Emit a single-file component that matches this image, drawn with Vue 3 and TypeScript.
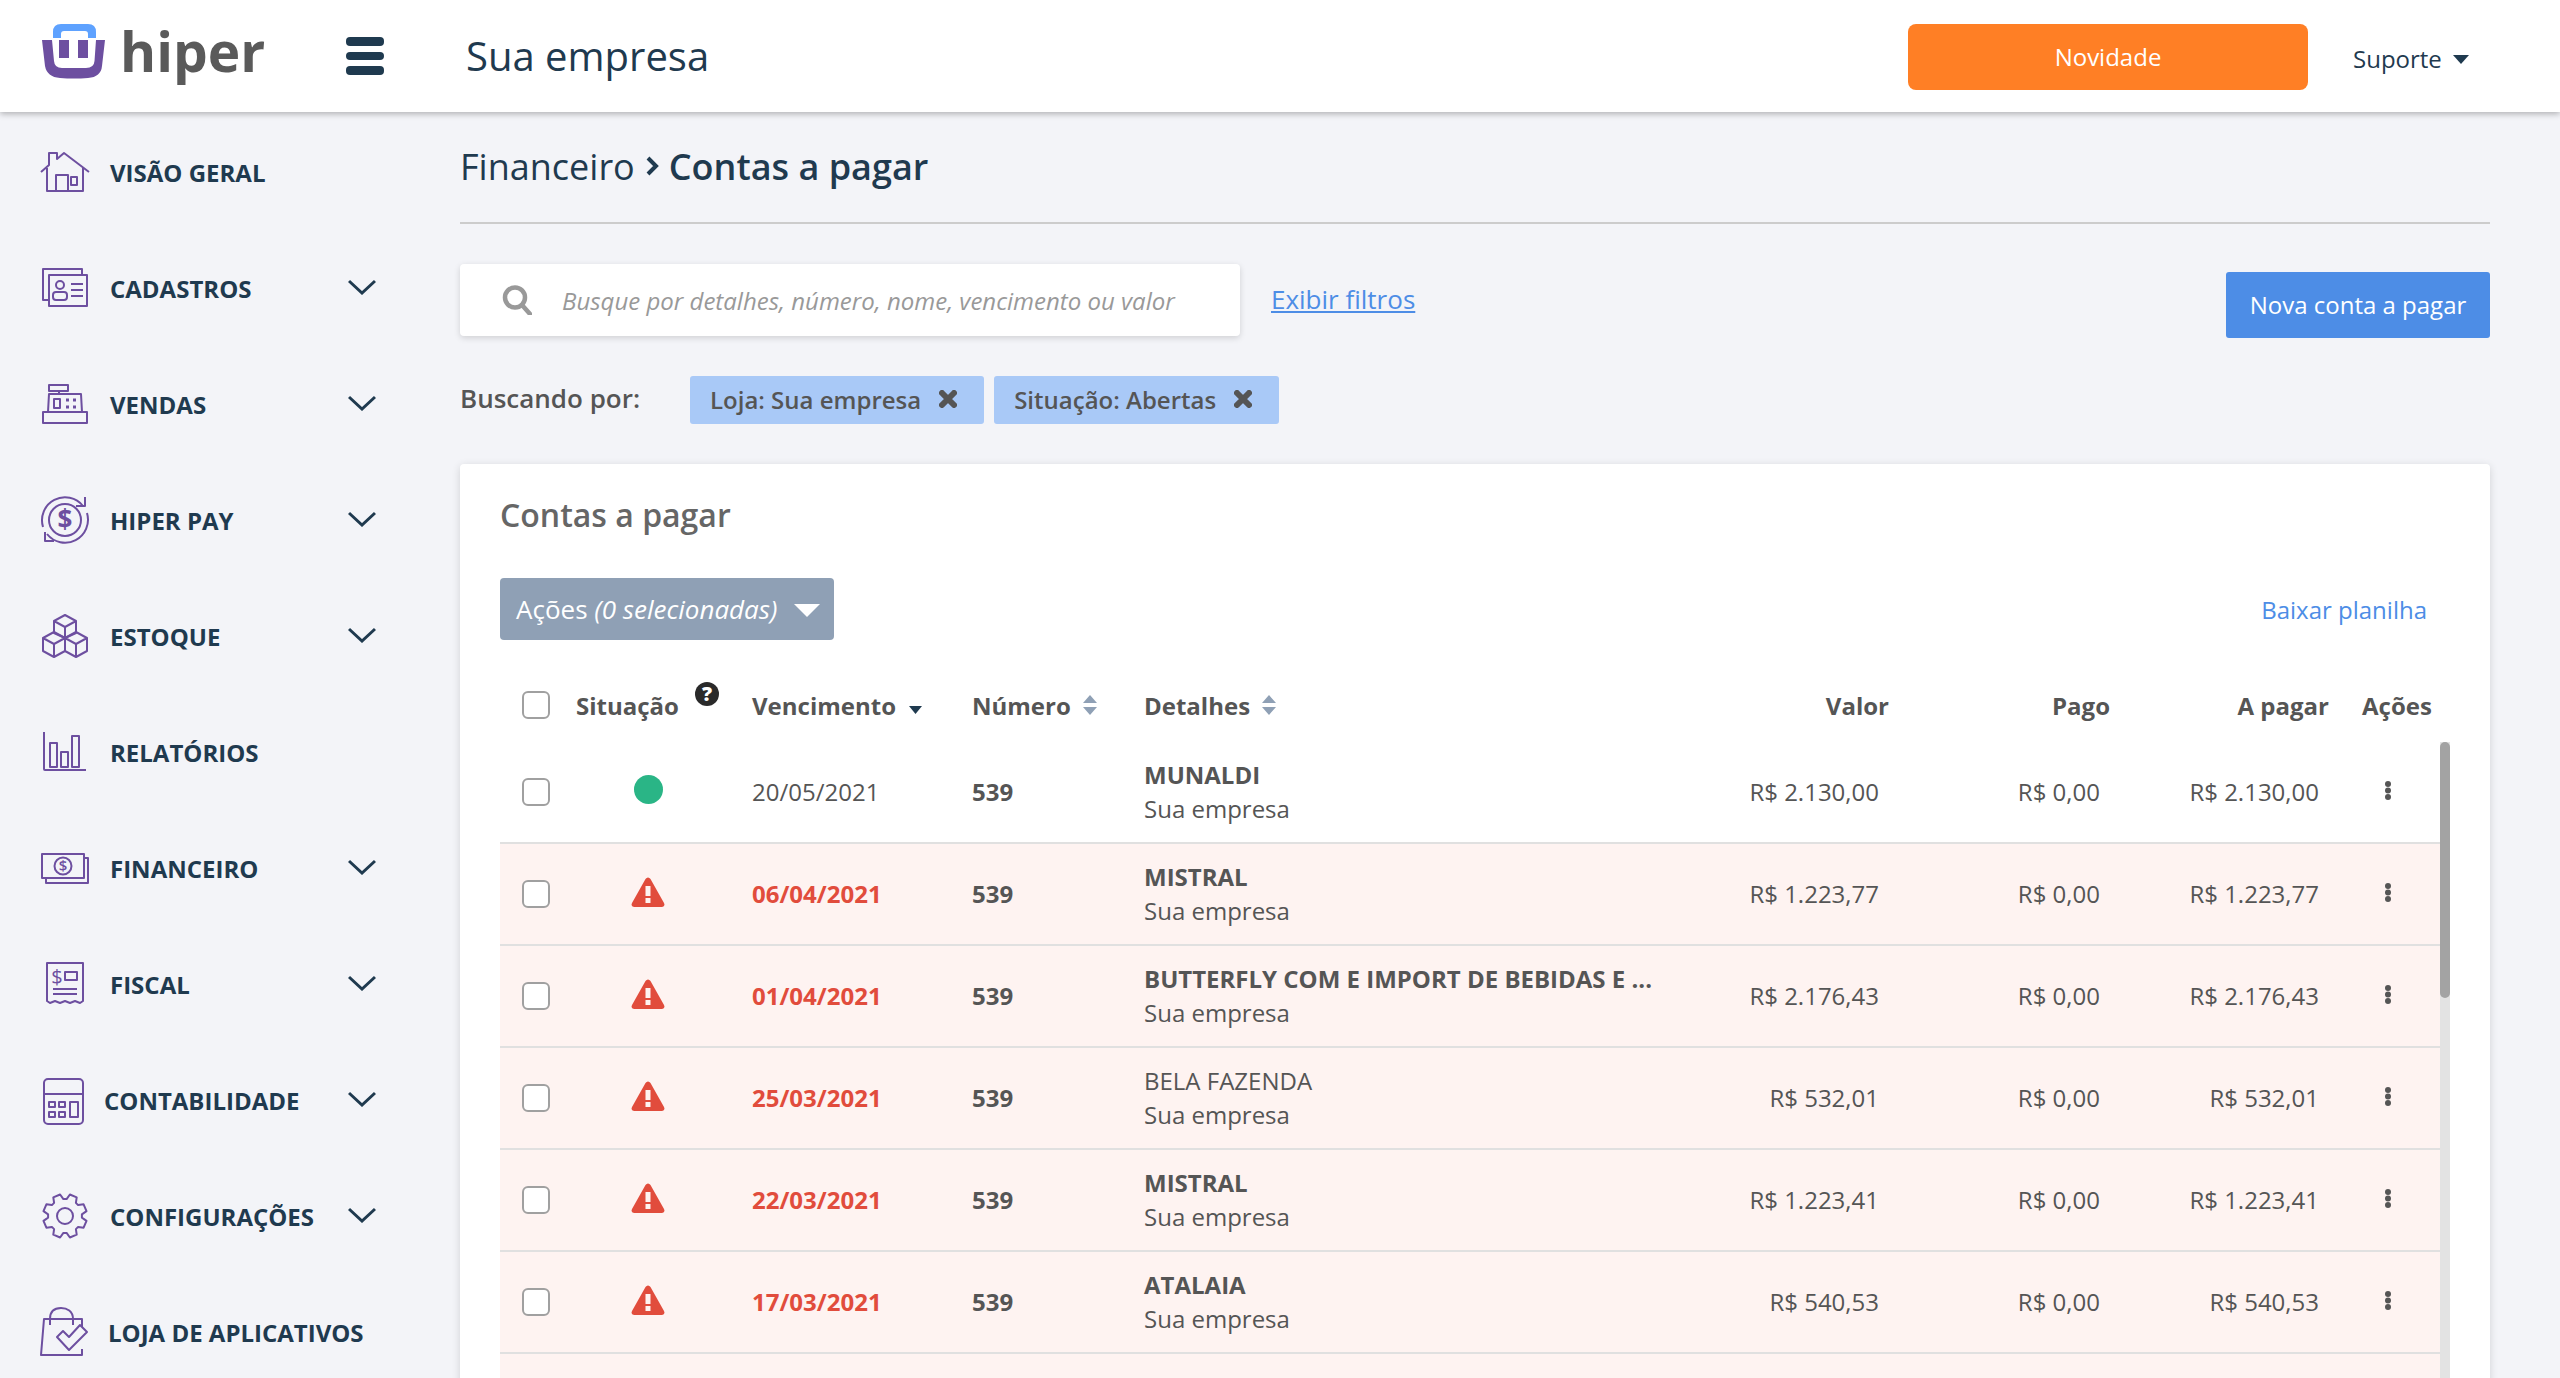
<template>
  <div class="page">
    <!-- Barra superior -->
    <header class="topbar">
      <svg class="logo" width="64" height="58" viewBox="0 0 64 58">
        <path d="M11 17 V11 Q11 3 19 3 H46 Q54 3 54 11 V17 H46 V13 Q46 10 43 10 H22 Q19 10 19 13 V17 Z" fill="#5ea2ff" />
        <path d="M0 19 H10 L12 40 Q12.500 47 20 47 H44 Q52 47 52.500 40 L54 19 H63 L60 45 Q59 56 46 57 Q32 58 18 57 Q5 56 3 45 Z" fill="#6d4fa0" />
        <rect x="17" y="19" width="10" height="18" fill="#6d4fa0" />
        <rect x="36" y="19" width="10" height="18" fill="#6d4fa0" />
      </svg>
      <span class="brand">hiper</span>
      <button class="burger"><i></i><i></i><i></i></button>
      <span class="company">Sua empresa</span>
      <button class="news">Novidade</button>
      <span class="support">Suporte<b class="caret"></b></span>
    </header>

    <div class="layout">
      <!-- Menu lateral -->
      <nav class="sidebar">
        <a v-for="item in menu" :key="item.label" class="nav-item" :class="item.cls">
          <svg class="nav-icon" width="50" height="50" viewBox="0 0 50 50" fill="none" stroke="#6d4fa0" stroke-width="2" stroke-linejoin="round">
            <template v-if="item.icon === 'home'">
              <path d="M1 25 L9 18 V6 H17 V12 L24 6 L49 25" />
              <path d="M7 21 V44 H43 V21" />
              <path d="M16 44 V28 H28 V44" />
              <rect x="31" y="30" width="6" height="8" />
            </template>
            <template v-else-if="item.icon === 'card'">
              <path d="M9 37 H3 V6 H42 V12" />
              <rect x="9" y="12" width="38" height="31" />
              <circle cx="20" cy="22" r="4" />
              <rect x="13" y="29" width="14" height="8" rx="3" />
              <path d="M31 21 H43 M31 27 H43 M31 33 H43" />
            </template>
            <template v-else-if="item.icon === 'register'">
              <rect x="3" y="33" width="44" height="11" />
              <path d="M8 33 L9 15 H41 L42 33" />
              <path d="M9 6 H28 V12 H9 Z M19 12 V15" />
              <rect x="14" y="20" width="6" height="9" />
              <path d="M26 21 H29 M33 21 H36 M26 28 H29 M33 28 H36" stroke-width="3" />
            </template>
            <template v-else-if="item.icon === 'pay'">
              <path d="M43 11 A23 23 0 0 0 3 32" />
              <path d="M7 39 A23 23 0 0 0 47 18" />
              <path d="M36 11 H45 V2" />
              <path d="M5 37 V46 H14" />
              <circle cx="25" cy="25" r="16" />
              <text x="25" y="34" class="money money-lg">$</text>
            </template>
            <template v-else-if="item.icon === 'boxes'">
              <path d="M25 4 L36 10 V22 L25 27 L14 22 V10 Z M14 10 L25 16 L36 10 M25 16 V27" />
              <path d="M3 27 L14 21 L25 27 V40 L14 46 L3 40 Z M3 27 L14 33 L25 27 M14 33 V46" />
              <path d="M25 27 L36 21 L47 27 V40 L36 46 L25 40 Z M25 27 L36 33 L47 27 M36 33 V46" />
            </template>
            <template v-else-if="item.icon === 'chart'">
              <path d="M4 5 V42 Q4 43 5 43 H46" />
              <rect x="10" y="16" width="7" height="24" />
              <rect x="21" y="25" width="7" height="15" />
              <rect x="32" y="9" width="7" height="31" />
            </template>
            <template v-else-if="item.icon === 'cash'">
              <rect x="2" y="11" width="42" height="24" />
              <path d="M44 15 H48 V40 H6 V35" />
              <circle cx="23" cy="23" r="8.500" />
              <text x="23" y="28" class="money">$</text>
            </template>
            <template v-else-if="item.icon === 'receipt'">
              <path d="M7 4 H43 V42 L40 44 L35 42 L30 44 L25 42 L20 44 L15 42 L10 44 L7 42 Z" />
              <text x="17" y="25" class="money money-md">$</text>
              <rect x="25" y="13" width="12" height="8" />
              <path d="M13 30 H37 M13 35 H37" />
            </template>
            <template v-else-if="item.icon === 'calc'">
              <rect x="4" y="4" width="39" height="45" rx="4" />
              <path d="M4 19 H43" />
              <rect x="9" y="27" width="6" height="5" />
              <rect x="19" y="27" width="6" height="5" />
              <rect x="9" y="37" width="6" height="5" />
              <rect x="19" y="37" width="6" height="5" />
              <rect x="30" y="27" width="8" height="15" />
            </template>
            <template v-else-if="item.icon === 'gear'">
              <path :d="gearPath" />
              <circle cx="25" cy="25" r="8" />
            </template>
            <template v-else>
              <path d="M42 25 V12 H4 L1 48 H42 V42" />
              <path d="M10 18 V12 C10 4 15 1 21 1 C27 1 33 4 33 12 V18" />
              <path d="M17 30 L23 24 L29 30 L40 18 L47 25 L29 43 Z" fill="#f3f4f8" />
            </template>
          </svg>
          <span class="nav-label">{{ item.label }}</span>
          <svg v-if="item.arrow" class="chevron" width="28" height="16" viewBox="0 0 28 16" fill="none" stroke="#1f3a4f" stroke-width="3">
            <path d="M1 2 L14 14 L27 2" />
          </svg>
        </a>
      </nav>

      <main class="content">
        <div class="crumb">
          <span class="crumb-root">Financeiro</span>
          <svg width="14" height="20" viewBox="0 0 14 20" fill="none" stroke="#1f3a4f" stroke-width="4">
            <path d="M3 2 L11 10 L3 18" />
          </svg>
          <strong>Contas a pagar</strong>
        </div>

        <div class="toolbar">
          <label class="search">
            <svg width="30" height="30" viewBox="0 0 30 30" fill="none" stroke="#999" stroke-width="4.500">
              <circle cx="13" cy="12.500" r="10" />
              <path d="M20 20 L28 29" stroke-linecap="round" />
            </svg>
            <input type="text" placeholder="Busque por detalhes, número, nome, vencimento ou valor" />
          </label>
          <a class="filters">Exibir filtros</a>
          <button class="new-btn">Nova conta a pagar</button>
        </div>

        <div class="chips">
          <span class="chips-label">Buscando por:</span>
          <span v-for="chip in chips" :key="chip" class="chip">
            {{ chip }}
            <svg width="18" height="18" viewBox="0 0 18 18" stroke="#555" stroke-width="6" stroke-linecap="round">
              <path d="M3 3 L15 15 M15 3 L3 15" />
            </svg>
          </span>
        </div>

        <section class="card">
          <h2>Contas a pagar</h2>
          <div class="card-actions">
            <button class="bulk">Ações <em>(0 selecionadas)</em><b class="bulk-caret"></b></button>
            <a class="sheet">Baixar planilha</a>
          </div>

          <div class="grid thead">
            <span><input type="checkbox" class="check" /></span>
            <span class="th-status">Situação<i class="help">?</i></span>
            <span class="th-sort">Vencimento
              <svg class="sort-down" width="13" height="8" viewBox="0 0 13 8"><path d="M0 0 H13 L6.500 8 Z" fill="#1f3a4f" /></svg>
            </span>
            <span class="th-sort">Número
              <svg width="14" height="20" viewBox="0 0 14 20" fill="#8fa0b5"><path d="M7 0 L14 8 H0 Z M7 20 L14 12 H0 Z" /></svg>
            </span>
            <span class="th-sort">Detalhes
              <svg width="14" height="20" viewBox="0 0 14 20" fill="#8fa0b5"><path d="M7 0 L14 8 H0 Z M7 20 L14 12 H0 Z" /></svg>
            </span>
            <span class="right">Valor</span>
            <span class="right">Pago</span>
            <span class="right">A pagar</span>
            <span class="th-actions">Ações</span>
          </div>

          <div class="tbody">
            <div class="rows">
              <div v-for="row in rows" :key="row.due" class="grid row" :class="{ late: row.late }">
                <span><input type="checkbox" class="check" /></span>
                <span class="status">
                  <svg v-if="row.late" width="34" height="31" viewBox="0 0 34 31">
                    <path d="M17 1.500 Q18.500 1.500 19.500 3 L33 27 Q34.500 30.500 31 31 H3 Q-.5 30.500 1 27 L14.500 3 Q15.500 1.500 17 1.500 Z" fill="#e14c3c" />
                    <rect x="14.500" y="10" width="5" height="10" fill="#fef3f1" />
                    <rect x="14.500" y="22" width="5" height="5" fill="#fef3f1" />
                  </svg>
                  <i v-else class="dot"></i>
                </span>
                <span class="due">{{ row.due }}</span>
                <span class="num">539</span>
                <span class="details">
                  <b :class="{ plain: row.plain }">{{ row.name }}</b>
                  <small>Sua empresa</small>
                </span>
                <span class="right money-cell">R$ {{ row.value }}</span>
                <span class="right money-cell">R$ 0,00</span>
                <span class="right money-cell">R$ {{ row.value }}</span>
                <span class="more">
                  <svg width="6" height="19" viewBox="0 0 6 19" fill="#555">
                    <circle cx="3" cy="3" r="3" /><circle cx="3" cy="9.500" r="3" /><circle cx="3" cy="16" r="3" />
                  </svg>
                </span>
              </div>
              <div class="grid row late"></div>
            </div>
            <div class="scrollbar"><div class="thumb"></div></div>
          </div>
        </section>
      </main>
    </div>
  </div>
</template>

<script setup lang="ts">
interface MenuItem {
  label: string
  icon: string
  arrow: boolean
  cls?: string
}

interface Row {
  due: string
  name: string
  value: string
  late: boolean
  plain?: boolean
}

const menu: MenuItem[] = [
  { label: 'Visão geral', icon: 'home', arrow: false },
  { label: 'Cadastros', icon: 'card', arrow: true },
  { label: 'Vendas', icon: 'register', arrow: true },
  { label: 'Hiper Pay', icon: 'pay', arrow: true },
  { label: 'Estoque', icon: 'boxes', arrow: true },
  { label: 'Relatórios', icon: 'chart', arrow: false },
  { label: 'Financeiro', icon: 'cash', arrow: true },
  { label: 'Fiscal', icon: 'receipt', arrow: true },
  { label: 'Contabilidade', icon: 'calc', arrow: true, cls: 'tight' },
  { label: 'Configurações', icon: 'gear', arrow: true },
  { label: 'Loja de aplicativos', icon: 'bag', arrow: false, cls: 'semi-tight' },
]

const chips = ['Loja: Sua empresa', 'Situação: Abertas']

const rows: Row[] = [
  { due: '20/05/2021', name: 'MUNALDI', value: '2.130,00', late: false },
  { due: '06/04/2021', name: 'MISTRAL', value: '1.223,77', late: true },
  { due: '01/04/2021', name: 'BUTTERFLY COM E IMPORT DE BEBIDAS E ...', value: '2.176,43', late: true },
  { due: '25/03/2021', name: 'BELA FAZENDA', value: '532,01', late: true, plain: true },
  { due: '22/03/2021', name: 'MISTRAL', value: '1.223,41', late: true },
  { due: '17/03/2021', name: 'ATALAIA', value: '540,53', late: true },
]

// Contorno da engrenagem: oito dentes em volta do centro do ícone
const gearPath = (() => {
  const pts: string[] = []
  for (let i = 0; i < 8; i++) {
    const a = (i * 45 + 22.5) * (Math.PI / 180)
    const spots: [number, number][] = [[17, -0.3], [22, -0.17], [22, 0.17], [17, 0.3]]
    for (const [r, d] of spots) {
      pts.push(`${(25 + r * Math.cos(a + d)).toFixed(1)} ${(25 + r * Math.sin(a + d)).toFixed(1)}`)
    }
  }
  return `M${pts.join(' L')} Z`
})()
</script>

<style>
html,
body {
  margin: 0;
  background: #f3f4f8;
  overflow: hidden;
}
</style>

<style scoped>
.page {
  height: 1378px;
  overflow: hidden;
  background: #f3f4f8;
  font-family: "Open Sans", "Noto Sans", sans-serif;
  font-size: 24px;
  color: #555;
}

button {
  border: 0;
  font-family: inherit;
  padding: 0;
}

.topbar {
  position: relative;
  height: 112px;
  display: flex;
  align-items: center;
  padding: 0 0 0 42px;
  background: #fff;
  box-shadow: 0 2px 6px rgba(0, 0, 0, 0.28);
  box-sizing: border-box;
}

.logo {
  flex: none;
  margin-top: -12px;
}

.brand {
  margin-left: 14px;
  margin-top: -12px;
  font-size: 55px;
  font-weight: 700;
  color: #5a5a5a;
  width: 226px;
}

.burger {
  width: 38px;
  display: flex;
  flex-direction: column;
  gap: 6px;
  background: none;
  flex: none;
}

.burger i {
  height: 8.5px;
  border-radius: 4px;
  background: #1f3a4f;
}

.company {
  margin-left: 82px;
  margin-top: -2px;
  font-size: 40px;
  color: #1f3a4f;
}

.news {
  margin-left: auto;
  width: 400px;
  height: 66px;
  margin-top: 2px;
  padding-bottom: 2px;
  border-radius: 8px;
  background: #ff7f25;
  color: #fff;
  font-size: 24px;
}

.support {
  width: 252px;
  padding-left: 45px;
  box-sizing: border-box;
  margin-top: 4px;
  color: #1f3a4f;
  display: flex;
  align-items: center;
}

.caret {
  margin-left: 11px;
  margin-top: 3px;
  border-top: 9px solid #1f3a4f;
  border-left: 8px solid transparent;
  border-right: 8px solid transparent;
}

.layout {
  display: flex;
}

.sidebar {
  width: 460px;
  flex: none;
  padding-top: 2px;
}

.nav-item {
  height: 116px;
  display: flex;
  align-items: center;
  padding-left: 40px;
  color: #1f3a4f;
}

.nav-icon {
  flex: none;
  margin-right: 20px;
}

.nav-label {
  font-size: 24px;
  font-weight: 700;
  text-transform: uppercase;
  white-space: nowrap;
}

.tight .nav-label {
  margin-left: -6px;
}

.semi-tight .nav-label {
  margin-left: -2px;
}

.chevron {
  position: absolute;
  left: 348px;
  margin-top: -2px;
}

.money {
  font-family: "Open Sans", sans-serif;
  font-size: 15px;
  font-weight: 600;
  fill: #6d4fa0;
  stroke: none;
  text-anchor: middle;
}

.money-lg {
  font-size: 26px;
  font-weight: 700;
}

.money-md {
  font-size: 20px;
  font-weight: 400;
}

.content {
  flex: 1;
  min-width: 0;
  padding-right: 70px;
}

.crumb {
  display: flex;
  align-items: center;
  gap: 10px;
  padding: 0 0 2px 0;
  border-bottom: 2px solid #ccc;
  box-sizing: border-box;
  height: 112px;
  font-size: 36px;
  color: #1f3a4f;
}

.crumb strong {
  font-weight: 600;
}

.toolbar {
  margin-top: 40px;
  display: flex;
  align-items: flex-start;
}

.search {
  width: 780px;
  height: 72px;
  display: flex;
  align-items: center;
  gap: 30px;
  padding-left: 42px;
  box-sizing: border-box;
  background: #fff;
  border-radius: 4px;
  box-shadow: 0 2px 6px rgba(0, 0, 0, 0.15);
}

.search input {
  flex: 1;
  min-width: 0;
  border: 0;
  outline: 0;
  padding: 0;
  font-family: inherit;
  font-size: 24px;
  background: transparent;
}

.search input::placeholder {
  color: #999;
  font-style: italic;
}

.filters {
  margin: 17px 0 0 31px;
  font-size: 26px;
  color: #4d8de6;
  text-decoration: underline;
}

.new-btn {
  margin: 8px 0 0 auto;
  width: 264px;
  height: 66px;
  padding-bottom: 2px;
  border-radius: 3px;
  background: #4d8de6;
  color: #fff;
  font-size: 24px;
}

.chips {
  margin-top: 38px;
  display: flex;
  align-items: center;
  height: 48px;
}

.chips-label {
  width: 230px;
  padding: 0 0 4px 0;
  box-sizing: border-box;
  font-size: 26px;
  font-weight: 600;
  color: #555;
}

.chip {
  height: 48px;
  margin-right: 10px;
  padding: 0 27px 2px 20px;
  display: flex;
  align-items: center;
  gap: 18px;
  border-radius: 3px;
  box-sizing: border-box;
  background: #a9c9f7;
  font-weight: 600;
  white-space: nowrap;
}

.card {
  margin-top: 40px;
  padding: 0 40px;
  background: #fff;
  border-radius: 4px 4px 0 0;
  box-shadow: 0 2px 8px rgba(0, 0, 0, 0.14);
}

.card h2 {
  margin: 0;
  height: 114px;
  padding-top: 29px;
  box-sizing: border-box;
  font-size: 32px;
  font-weight: 600;
  color: #666;
}

.card-actions {
  display: flex;
  justify-content: space-between;
  align-items: center;
  height: 62px;
}

.bulk {
  width: 334px;
  height: 62px;
  padding-left: 16px;
  padding-bottom: 1px;
  display: flex;
  align-items: center;
  background: #8fa0b5;
  border-radius: 4px;
  color: #fff;
  font-size: 26px;
  white-space: pre;
}

.bulk-caret {
  margin-left: 17px;
  margin-top: 4px;
  border-top: 13px solid #fff;
  border-left: 13px solid transparent;
  border-right: 13px solid transparent;
}

.sheet {
  margin-right: 23px;
  color: #4d8de6;
  font-size: 24px;
}

.grid {
  display: grid;
  grid-template-columns: 76px 176px 220px 172px 445px 300px 221px 219px 111px;
  align-items: center;
}

.thead {
  height: 102px;
  padding-top: 28px;
  box-sizing: border-box;
  font-weight: 700;
  white-space: nowrap;
}

.thead > span {
  display: flex;
  align-items: center;
}

.th-sort {
  gap: 12px;
}

.sort-down {
  margin-top: 10px;
  margin-left: 1px;
}

.th-status {
  position: relative;
}

.help {
  position: absolute;
  left: 119px;
  top: -7px;
  width: 24px;
  height: 24px;
  border-radius: 50%;
  background: #2a2a2a;
  color: #fff;
  font-size: 20px;
  font-style: normal;
  font-weight: 800;
  line-height: 24px;
  text-align: center;
}

.thead .right {
  justify-content: flex-end;
}

.th-actions {
  margin-left: 33px;
}

.check {
  display: block;
  margin: 0 0 0 22px;
  width: 28px;
  height: 28px;
  appearance: none;
  background: #fff;
  border: 2px solid #a0a0a0;
  border-radius: 6px;
  box-sizing: border-box;
}

.tbody {
  display: flex;
}

.rows {
  flex: 1;
  min-width: 0;
}

.row {
  height: 102px;
  border-bottom: 2px solid #e0e0e0;
  box-sizing: border-box;
}

.row.late {
  background: #fef3f1;
}

.status {
  width: 144px;
  display: flex;
  justify-content: center;
  margin-top: -6px;
}

.dot {
  width: 29px;
  height: 29px;
  border-radius: 50%;
  background: #2ab586;
}

.due,
.num,
.money-cell {
  margin-top: -2px;
}

.late .due {
  color: #e14c3c;
  font-weight: 700;
}

.num {
  font-weight: 700;
}

.details {
  display: flex;
  flex-direction: column;
  line-height: 34px;
  white-space: nowrap;
}

.details b {
  font-weight: 700;
}

.details b.plain {
  font-weight: 400;
}

.details small {
  font-size: inherit;
}

.right {
  text-align: right;
}

.money-cell {
  padding-right: 10px;
}

.more {
  padding-left: 56px;
  display: flex;
  margin-top: -3px;
}

.scrollbar {
  width: 10px;
  flex: none;
  background: #e3e3e3;
}

.thumb {
  height: 256px;
  border-radius: 5px;
  background: #a3a3a3;
}
</style>
